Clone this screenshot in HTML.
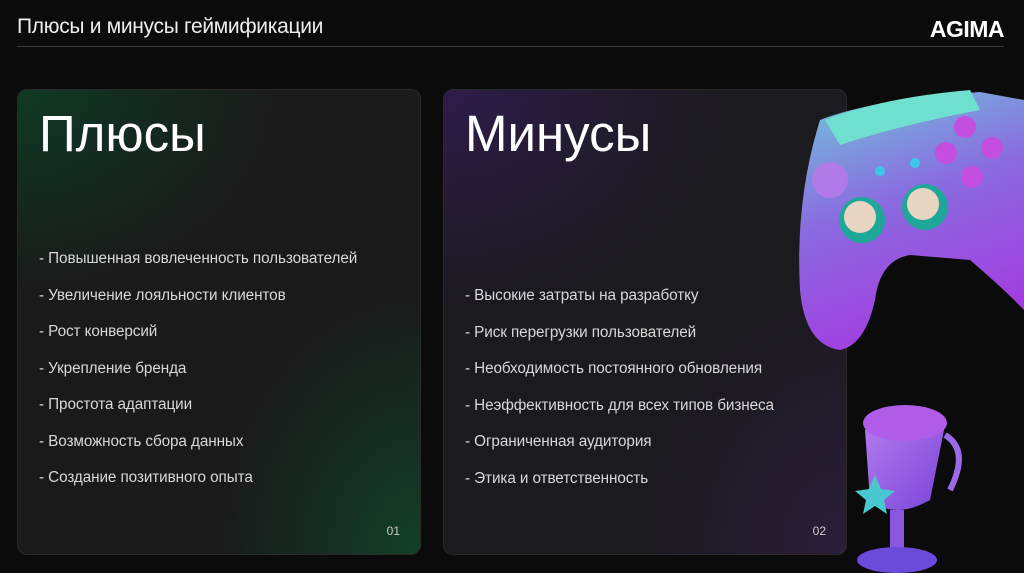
<!DOCTYPE html>
<html><head><meta charset="utf-8"><style>
body{margin:0;width:1024px;height:573px;background:#0b0b0b;overflow:hidden;position:relative;font-family:"Liberation Sans",sans-serif;color:#fff}
.hdr{position:absolute;left:17px;top:15px;font-size:21px;color:#eee;letter-spacing:-0.3px}
.logo{position:absolute;right:20px;top:16px;font-size:23px;font-weight:bold;letter-spacing:-0.5px}
.line{position:absolute;left:17px;right:20px;top:46px;height:1px;background:#3a3a3a}
.card{position:absolute;top:89px;width:404px;height:466px;border-radius:10px;border:1px solid #2a2a2a;box-sizing:border-box}
.c1{left:17px;background:radial-gradient(ellipse 260px 200px at 0% 0%,#0f3a24 0%,rgba(15,58,36,0) 100%),radial-gradient(ellipse 200px 260px at 100% 100%,#12402a 0%,rgba(18,64,42,0) 100%),#1a1a1a}
.c2{left:443px;background:radial-gradient(ellipse 280px 220px at 0% 0%,#2e1c4a 0%,rgba(46,28,74,0) 100%),radial-gradient(ellipse 200px 260px at 100% 100%,#2a1e3a 0%,rgba(42,30,58,0) 100%),#1b1a1e}
.t{position:absolute;left:21px;top:14px;font-size:51px;font-weight:normal}
ul{position:absolute;left:21px;margin:0;padding:0;list-style:none;font-size:15.3px;color:#d8d8d8;letter-spacing:-0.1px}
li{height:36.5px;line-height:20px}
.n{position:absolute;right:20px;bottom:16px;font-size:12px;color:#ccc}
</style></head><body>
<div class="hdr">Плюсы и минусы геймификации</div>
<div class="logo">AGIMA</div>
<div class="line"></div>
<div class="card c1"><div class="t">Плюсы</div>
<ul style="top:159px"><li>- Повышенная вовлеченность пользователей</li><li>- Увеличение лояльности клиентов</li><li>- Рост конверсий</li><li>- Укрепление бренда</li><li>- Простота адаптации</li><li>- Возможность сбора данных</li><li>- Создание позитивного опыта</li></ul>
<div class="n">01</div></div>
<div class="card c2"><div class="t">Минусы</div>
<ul style="top:196px"><li>- Высокие затраты на разработку</li><li>- Риск перегрузки пользователей</li><li>- Необходимость постоянного обновления</li><li>- Неэффективность для всех типов бизнеса</li><li>- Ограниченная аудитория</li><li>- Этика и ответственность</li></ul>
<div class="n">02</div></div>
<svg style="position:absolute;left:780px;top:80px" width="244" height="493" viewBox="0 0 244 493">
<defs><linearGradient id="g" x1="0" y1="0" x2="0.3" y2="1"><stop offset="0" stop-color="#6fc7d9"/><stop offset="0.5" stop-color="#8a6be0"/><stop offset="1" stop-color="#a23ee0"/></linearGradient>
<linearGradient id="cup" x1="0" y1="0" x2="1" y2="1"><stop offset="0" stop-color="#b57ef0"/><stop offset="1" stop-color="#7a44d8"/></linearGradient></defs>
<path d="M40 40 Q90 20 200 12 L244 20 L244 230 Q225 210 190 180 L130 175 Q100 180 95 220 Q85 265 60 270 Q25 265 20 210 Q15 120 40 40Z" fill="url(#g)"/>
<path d="M45 40 Q100 18 190 10 L200 30 Q120 45 60 65Z" fill="#6fe0d0"/>
<circle cx="50" cy="100" r="18" fill="#b07ae8"/>
<circle cx="100" cy="91" r="5" fill="#3cc8e8"/><circle cx="135" cy="83" r="5" fill="#3cc8e8"/>
<circle cx="185" cy="47" r="11" fill="#c44ee0"/><circle cx="212" cy="68" r="11" fill="#c44ee0"/><circle cx="166" cy="73" r="11" fill="#c44ee0"/><circle cx="192" cy="97" r="11" fill="#c44ee0"/>
<circle cx="82" cy="140" r="23" fill="#1fa89a"/><circle cx="80" cy="137" r="16" fill="#e8d6c2"/>
<circle cx="145" cy="127" r="23" fill="#1fa89a"/><circle cx="143" cy="124" r="16" fill="#e8d6c2"/>
<path d="M85 350 Q120 320 165 345 L150 420 Q115 440 90 420Z" fill="url(#cup)"/>
<ellipse cx="125" cy="343" rx="42" ry="18" fill="#b05ce8"/>
<path d="M165 355 Q190 370 170 410" stroke="#9a6ae8" stroke-width="6" fill="none"/>
<path d="M95 395 l6 14 14 2 -11 9 3 14 -12-8 -12 8 3-14 -11-9 14-2z" fill="#4ac8d0"/>
<rect x="110" y="430" width="14" height="40" fill="#8a58e0"/><ellipse cx="117" cy="480" rx="40" ry="13" fill="#6a4ad8"/>
</svg>
</body></html>
